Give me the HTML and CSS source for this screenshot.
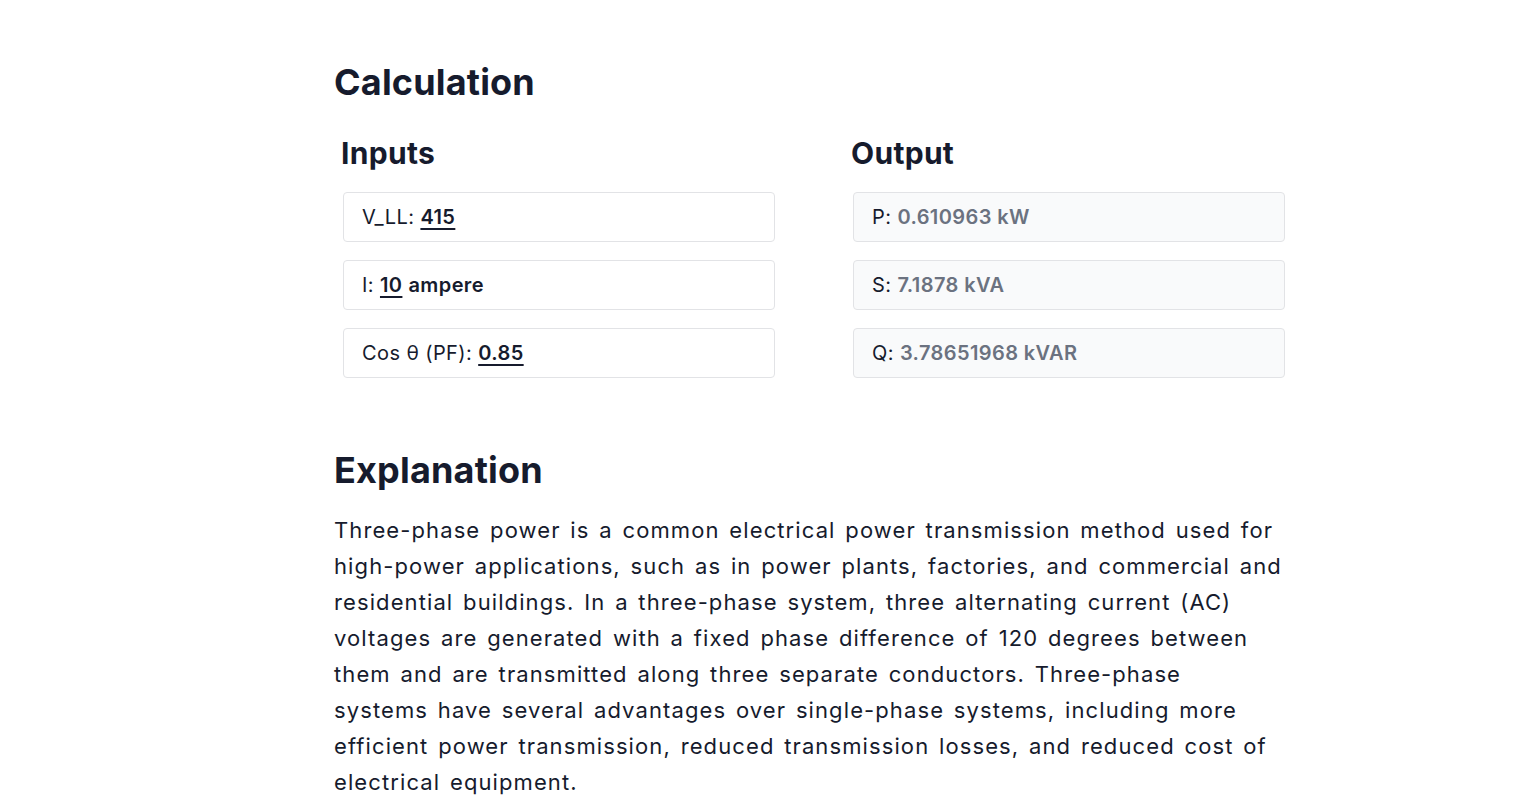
FILE: index.html
```html
<!DOCTYPE html>
<html>
<head>
<meta charset="utf-8">
<link rel="stylesheet" href="styles.css">
</head>
<body>
<main class="page">
  <h2 class="title">Calculation</h2>
  <div class="columns">
    <section class="col">
      <h3 class="subtitle">Inputs</h3>
      <div class="field">V_LL: <span class="val">415</span></div>
      <div class="field">I: <span class="val">10</span> <span class="unit">ampere</span></div>
      <div class="field">Cos θ (PF): <span class="val">0.85</span></div>
    </section>
    <section class="col">
      <h3 class="subtitle">Output</h3>
      <div class="field out">P: <span class="res">0.610963 kW</span></div>
      <div class="field out">S: <span class="res">7.1878 kVA</span></div>
      <div class="field out">Q: <span class="res">3.78651968 kVAR</span></div>
    </section>
  </div>
  <h2 class="title expl">Explanation</h2>
  <p class="text">Three-phase power is a common electrical power transmission method used for high-power applications, such as in power plants, factories, and commercial and residential buildings. In a three-phase system, three alternating current (AC) voltages are generated with a fixed phase difference of 120 degrees between them and are transmitted along three separate conductors. Three-phase systems have several advantages over single-phase systems, including more efficient power transmission, reduced transmission losses, and reduced cost of electrical equipment.</p>
</main>
</body>
</html>
```
FILE: styles.css
```css
html, body {
  margin: 0;
  padding: 0;
  background: #ffffff;
}
body {
  font-family: Inter, "Liberation Sans", sans-serif;
  color: #161b2d;
}
.page {
  width: 955px;
  margin-left: 334px;
  padding-top: 62px;
}
.title {
  margin: 0;
  font-size: 36px;
  line-height: 40px;
  font-weight: 700;
  letter-spacing: 0.005em;
  color: #161b2d;
}
.columns {
  display: grid;
  grid-template-columns: 432px 432px;
  column-gap: 78px;
  margin-top: 33px;
  margin-left: 9px;
}
.col {
  display: flex;
  flex-direction: column;
  gap: 18px;
}
.subtitle {
  margin: 0 0 3px -2px;
  font-size: 30px;
  line-height: 36px;
  font-weight: 700;
  letter-spacing: 0.01em;
  color: #161b2d;
}
.field {
  box-sizing: border-box;
  height: 50px;
  border: 1px solid #e2e3e6;
  border-radius: 4px;
  padding: 0 18px;
  line-height: 48px;
  white-space: nowrap;
  font-size: 20px;
  letter-spacing: 0.4px;
  color: #161b2d;
  background: #ffffff;
}
.val {
  font-weight: 600;
  text-decoration: underline;
  text-underline-offset: 4px;
  text-decoration-thickness: 2px;
}
.unit {
  font-weight: 600;
}
.out {
  background: #f9fafb;
}
.res {
  font-weight: 600;
  color: #6b7280;
}
.expl {
  margin-top: 72px;
}
.text {
  width: 948px;
  margin: 22px 0 0 0;
  font-size: 22px;
  line-height: 36px;
  letter-spacing: 1.1px;
  word-spacing: 2.5px;
  color: #161b2d;
}
```
